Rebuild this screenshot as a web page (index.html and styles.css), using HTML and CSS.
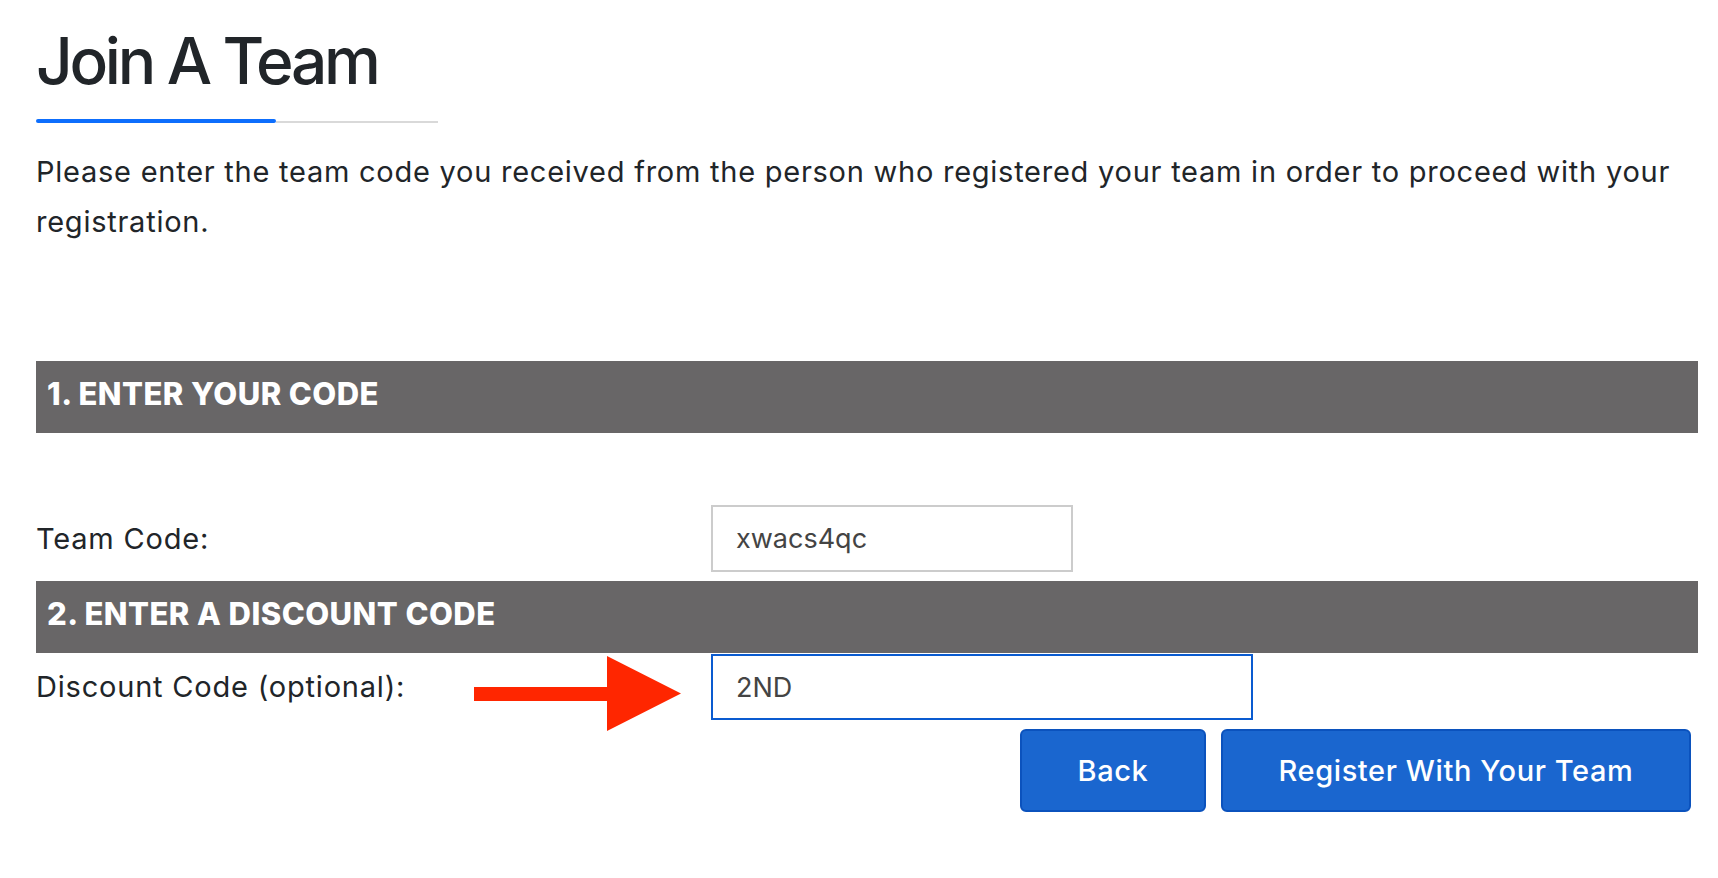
FILE: index.html
```html
<!DOCTYPE html>
<html lang="en">
<head>
<meta charset="utf-8">
<title>Join A Team</title>
<link rel="stylesheet" href="styles.css">
</head>
<body>
<main class="page">
  <h1 class="title">Join A Team</h1>
  <div class="title-rule">
    <span class="rule-accent"></span>
    <span class="rule-rest"></span>
  </div>
  <p class="intro">Please enter the team code you received from the person who registered your team in order to proceed with your registration.</p>

  <h2 class="section-bar section-bar--first">1. ENTER YOUR CODE</h2>
  <div class="field-row field-row--team">
    <label class="field-label" for="team-code">Team Code:</label>
    <input class="field-input field-input--team" id="team-code" type="text" value="xwacs4qc">
  </div>

  <h2 class="section-bar">2. ENTER A DISCOUNT CODE</h2>
  <div class="field-row field-row--discount">
    <label class="field-label" for="discount-code">Discount Code (optional):</label>
    <svg class="annot-arrow" width="207" height="75" viewBox="0 0 207 75" aria-hidden="true">
      <polygon points="0,31 133,31 133,0 207,37.5 133,75 133,45 0,45" fill="#ff2600"/>
    </svg>
    <input class="field-input field-input--discount" id="discount-code" type="text" value="2ND">
  </div>

  <div class="actions">
    <button class="btn btn--back" type="button">Back</button>
    <button class="btn btn--register" type="button">Register With Your Team</button>
  </div>
</main>
</body>
</html>
```
FILE: styles.css
```css
* { box-sizing: border-box; }

html, body {
  margin: 0;
  padding: 0;
  background: #ffffff;
}

body {
  font-family: "Inter", "Liberation Sans", sans-serif;
  color: #212529;
}

.page {
  width: 1662px;
  margin-left: 36px;
  padding-top: 21px;
}

.title {
  margin: 0;
  font-size: 64px;
  line-height: 80px;
  font-weight: 500;
  letter-spacing: -3.3px;
  color: #212529;
}

.title-rule {
  display: flex;
  align-items: flex-end;
  width: 402px;
  height: 4px;
  margin-top: 18px;
}

.rule-accent {
  width: 240px;
  height: 4px;
  background: #0d6efd;
  border-radius: 2px;
}

.rule-rest {
  flex: 1;
  height: 2px;
  background: #d9d9d9;
}

.intro {
  margin: 24px 0 0;
  font-size: 29px;
  line-height: 50px;
  font-weight: 400;
  letter-spacing: 0.75px;
}

.section-bar {
  margin: 0;
  height: 72px;
  padding: 13px 9px 19px 11px;
  background: #686667;
  color: #ffffff;
  font-size: 31px;
  line-height: 40px;
  font-weight: 800;
  letter-spacing: 0.45px;
}

.section-bar--first {
  margin-top: 114px;
}

.field-row {
  position: relative;
  display: grid;
  grid-template-columns: 675px auto;
  align-items: center;
  justify-content: start;
}

.field-row--team {
  margin-top: 72px;
  margin-bottom: 9px;
}

.field-row--discount {
  margin-top: 1px;
}

.field-label {
  font-size: 29px;
  line-height: 40px;
  letter-spacing: 0.8px;
}

.field-input {
  height: 67px;
  padding: 0 23px;
  border: 2px solid #cccccc;
  border-radius: 0;
  background: #ffffff;
  color: #444444;
  font-family: "Inter", "Liberation Sans", sans-serif;
  font-size: 27px;
  outline: none;
}

.field-input--team {
  width: 362px;
}

.field-input--discount {
  width: 542px;
  height: 66px;
  border-color: #0a5bd0;
}

.annot-arrow {
  position: absolute;
  left: 438px;
  top: 2px;
}

.actions {
  display: flex;
  justify-content: flex-end;
  gap: 15px;
  margin-top: 9px;
  padding-right: 7px;
}

.btn {
  height: 83px;
  border: 2px solid #0b52bd;
  border-radius: 6px;
  background: #1a66cf;
  color: #ffffff;
  font-family: "Inter", "Liberation Sans", sans-serif;
  font-size: 29px;
  font-weight: 500;
  letter-spacing: 0.6px;
  cursor: pointer;
}

.btn--back {
  width: 186px;
}

.btn--register {
  width: 470px;
}
```
